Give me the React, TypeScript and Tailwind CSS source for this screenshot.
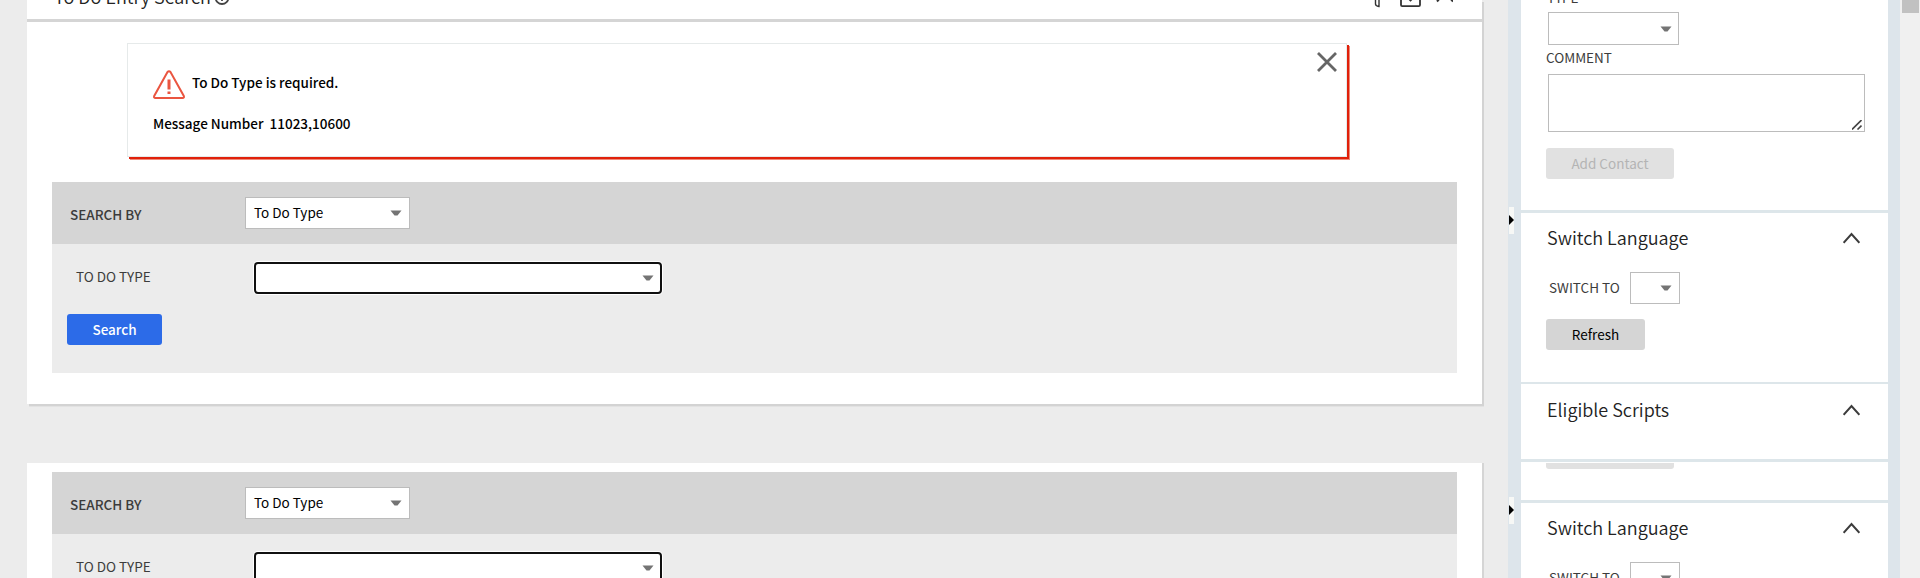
import React from "react";

const Caret = () => (
  <svg width="12" height="7" viewBox="0 0 12 7" className="shrink-0"><path d="M.5.5h11L7.500 5.600h-3z" fill="#747474" /></svg>
);

const Chevron = () => (
  <svg width="17" height="12" viewBox="0 0 17 12" className="shrink-0" fill="none" stroke="#3c3c3c" strokeWidth="2"><path d="M.6 10.800 8.500 2l7.900 8.800" /></svg>
);

function SearchPanel() {
  return (
    <div className="ml-[25px] h-[191px] w-[1405px] shrink-0 bg-[#ececec]">
      <div className="flex h-[62px] bg-[#d5d5d5] pt-[15px]">
        <div className="w-[193px] pl-[18px] pt-[7px] text-[13.5px] font-medium leading-5 text-[#3c3c3c]">SEARCH BY</div>
        <div className="flex h-8 w-[165px] items-center justify-between border border-[#bcbcbc] bg-white pl-[8px] pr-[7px] text-[13.5px] text-black">
          <span className="-mt-px">To Do Type</span>
          <Caret />
        </div>
      </div>
      <div className="flex pt-[18px]">
        <div className="w-[202px] pl-[24px] pt-[4px] text-[13.5px] leading-5 text-[#3c3c3c]">TO DO TYPE</div>
        <div className="flex h-8 w-[408px] items-center justify-end rounded-[4px] border-2 border-[#101010] bg-white pr-[6px] shadow-[0_0_0_1px_#fff]">
          <Caret />
        </div>
      </div>
      <button className="ml-[15px] mt-5 block h-[31px] w-[95px] rounded-[3px] bg-[#2c6be8] text-[13.5px] font-medium text-white">Search</button>
    </div>
  );
}

function SideTitle({ children }: { children: React.ReactNode }) {
  return (
    <div className="flex h-[26px] items-center justify-between pl-[26px] pr-[28px] text-[18px] font-[350] leading-6 text-[#222]">
      <span className="-mt-[2px]">{children}</span>
      <Chevron />
    </div>
  );
}

function SwitchLanguage() {
  return (
    <section className="h-[169px] shrink-0 pt-[12px]">
      <SideTitle>Switch Language</SideTitle>
      <div className="mt-[21px] flex items-center pl-[28px] text-[13.5px] text-[#3c3c3c]">
        <span className="-mt-px w-[81px]">SWITCH TO</span>
        <div className="flex h-8 w-[50px] items-center justify-end border border-[#bcbcbc] pr-[7px]"><Caret /></div>
      </div>
      <button className="ml-[25px] mt-[15px] block h-[31px] w-[99px] rounded-[3px] bg-[#d5d5d5] pb-px text-[13.5px] text-black">Refresh</button>
    </section>
  );
}

const Handle = () => (
  <div className="ml-px flex h-[27px] w-[5px] shrink-0 items-center bg-[#f7f8f6] pb-[2px]">
    <svg width="5" height="10" viewBox="0 0 5 10"><path d="M0 0 5 5 0 10z" fill="#000" /></svg>
  </div>
);

export default function App() {
  return (
    <div className="flex h-[578px] w-[1920px] overflow-hidden bg-[#ececec] font-['Noto_Sans_CJK_SC',sans-serif]">
      <main className="flex h-[578px] w-[1508px] shrink-0 flex-col overflow-hidden pl-[27px]">
        <div className="h-[404px] w-[1455px] shrink-0 bg-white shadow-[2px_2px_0_#d3d3d3,2px_3px_0_#e2e2e2]">
          <header className="flex h-[22px] items-start justify-between overflow-hidden border-b-[3px] border-[#d5d5d5] pl-[27px] pr-[29px]">
            <div className="flex items-start">
              <span className="-mt-[19px] text-[18px] font-[350] leading-[30px] text-[#222]">To Do Entry Search</span>
              <svg width="16" height="8" viewBox="0 0 16 8" className="ml-[3px]" fill="none" stroke="#444" strokeWidth="1.800"><circle cx="8" cy="-2.500" r="6.500" /><path d="M8-4v5" /></svg>
            </div>
            <svg width="80" height="8" viewBox="0 0 80 8" fill="none" stroke="#333">
              <path d="M2.500 0v4q0 2 3.500 2.500V0" strokeWidth="1.400" />
              <path d="M28 0v5q0 1.200 1.200 1.200h16.600Q47 6.200 47 5V0" strokeWidth="1.800" />
              <path d="m34.500-2.500 3 3 3-3" strokeWidth="1.800" />
              <path d="m64 1.500 8-9 8 9" strokeWidth="2" />
            </svg>
          </header>
          <div className="ml-[100px] mt-[21px] flex h-[114px] w-[1220px] justify-between border border-[#e6eaea] bg-white shadow-[2px_2px_0_#e0200a,3px_3px_0_#f08a7a]">
            <div className="pl-[25px] pt-[26px] text-[13.500px] font-medium text-black">
              <div className="flex h-[30px] gap-[7px]">
                <svg width="32" height="30" viewBox="0 0 32 30" fill="none" stroke="#ea5540" strokeWidth="2"><path d="M14.500 2 L1.200 26 Q0.500 28 2.500 28 L29.500 28 Q31.500 28 30.800 26 L17.500 2 Q16 0.300 14.500 2 Z" /><path d="M16 9.500 L16 19.500 M16 21.500 L16 24" strokeWidth="3" /></svg>
                <span className="leading-[25px]">To Do Type is required.</span>
              </div>
              <div className="mt-[13px] whitespace-pre leading-5">Message Number  11023,10600</div>
            </div>
            <svg width="20" height="20" viewBox="0 0 20 20" className="mr-[9px] mt-[8px]" stroke="#666" strokeWidth="2.800"><path d="m1 1 18 18M19 1 1 19" /></svg>
          </div>
          <div className="mt-[25px]"><SearchPanel /></div>
        </div>
        <div className="mt-[59px] h-[300px] w-[1455px] shrink-0 bg-white pt-[9px] shadow-[2px_0_0_#d5d5d5]">
          <SearchPanel />
        </div>
      </main>
      <div className="flex w-[13px] shrink-0 flex-col gap-[263px] bg-[#dde5eb] pt-[207px]">
        <Handle />
        <Handle />
      </div>
      <aside className="flex h-[578px] w-[367px] shrink-0 flex-col overflow-hidden bg-white">
        <section className="h-[210px] shrink-0">
          <div className="flex h-3 items-end overflow-hidden pl-[26px] text-[13.500px] text-[#3c3c3c]"><span className="mb-[5px] leading-5">TYPE</span></div>
          <div className="ml-[27px] flex h-[33px] w-[131px] items-center justify-end border border-[#bcbcbc] pr-[6px] pt-px"><Caret /></div>
          <div className="mt-[2px] pl-[25px] text-[13.500px] leading-5 text-[#3c3c3c]">COMMENT</div>
          <div className="ml-[27px] mt-[7px] flex h-[58px] w-[317px] items-end justify-end border border-[#bcbcbc] p-[2px] pb-px">
            <svg width="10" height="10" viewBox="0 0 10 10" stroke="#444" strokeWidth="1.600"><path d="M0 9.500 9.500 0M5.500 9.500 9.500 5.500" /></svg>
          </div>
          <button className="ml-[25px] mt-4 block h-[31px] w-[128px] rounded-[3px] bg-[#e1e1e1] pb-px text-[13.500px] text-[#b4b4b4]">Add Contact</button>
        </section>
        <div className="h-[3px] shrink-0 bg-[#dde6ea]" />
        <SwitchLanguage />
        <div className="h-[2px] shrink-0 bg-[#dde6ea]" />
        <section className="h-[75px] shrink-0 pt-[13px]"><SideTitle>Eligible Scripts</SideTitle></section>
        <div className="h-[3px] shrink-0 bg-[#dde6ea]" />
        <section className="h-[38px] shrink-0 pt-px"><div className="ml-[25px] h-[6px] w-[128px] rounded-b-[3px] bg-[#e1e1e1]" /></section>
        <div className="h-[3px] shrink-0 bg-[#dde6ea]" />
        <SwitchLanguage />
      </aside>
      <div className="w-3 shrink-0 bg-[#dde5eb]" />
      <div className="w-5 shrink-0 bg-[#f0f0f0] pl-[2px]"><div className="h-[13px] w-[17px] bg-[#c1c1c1]" /></div>
    </div>
  );
}
